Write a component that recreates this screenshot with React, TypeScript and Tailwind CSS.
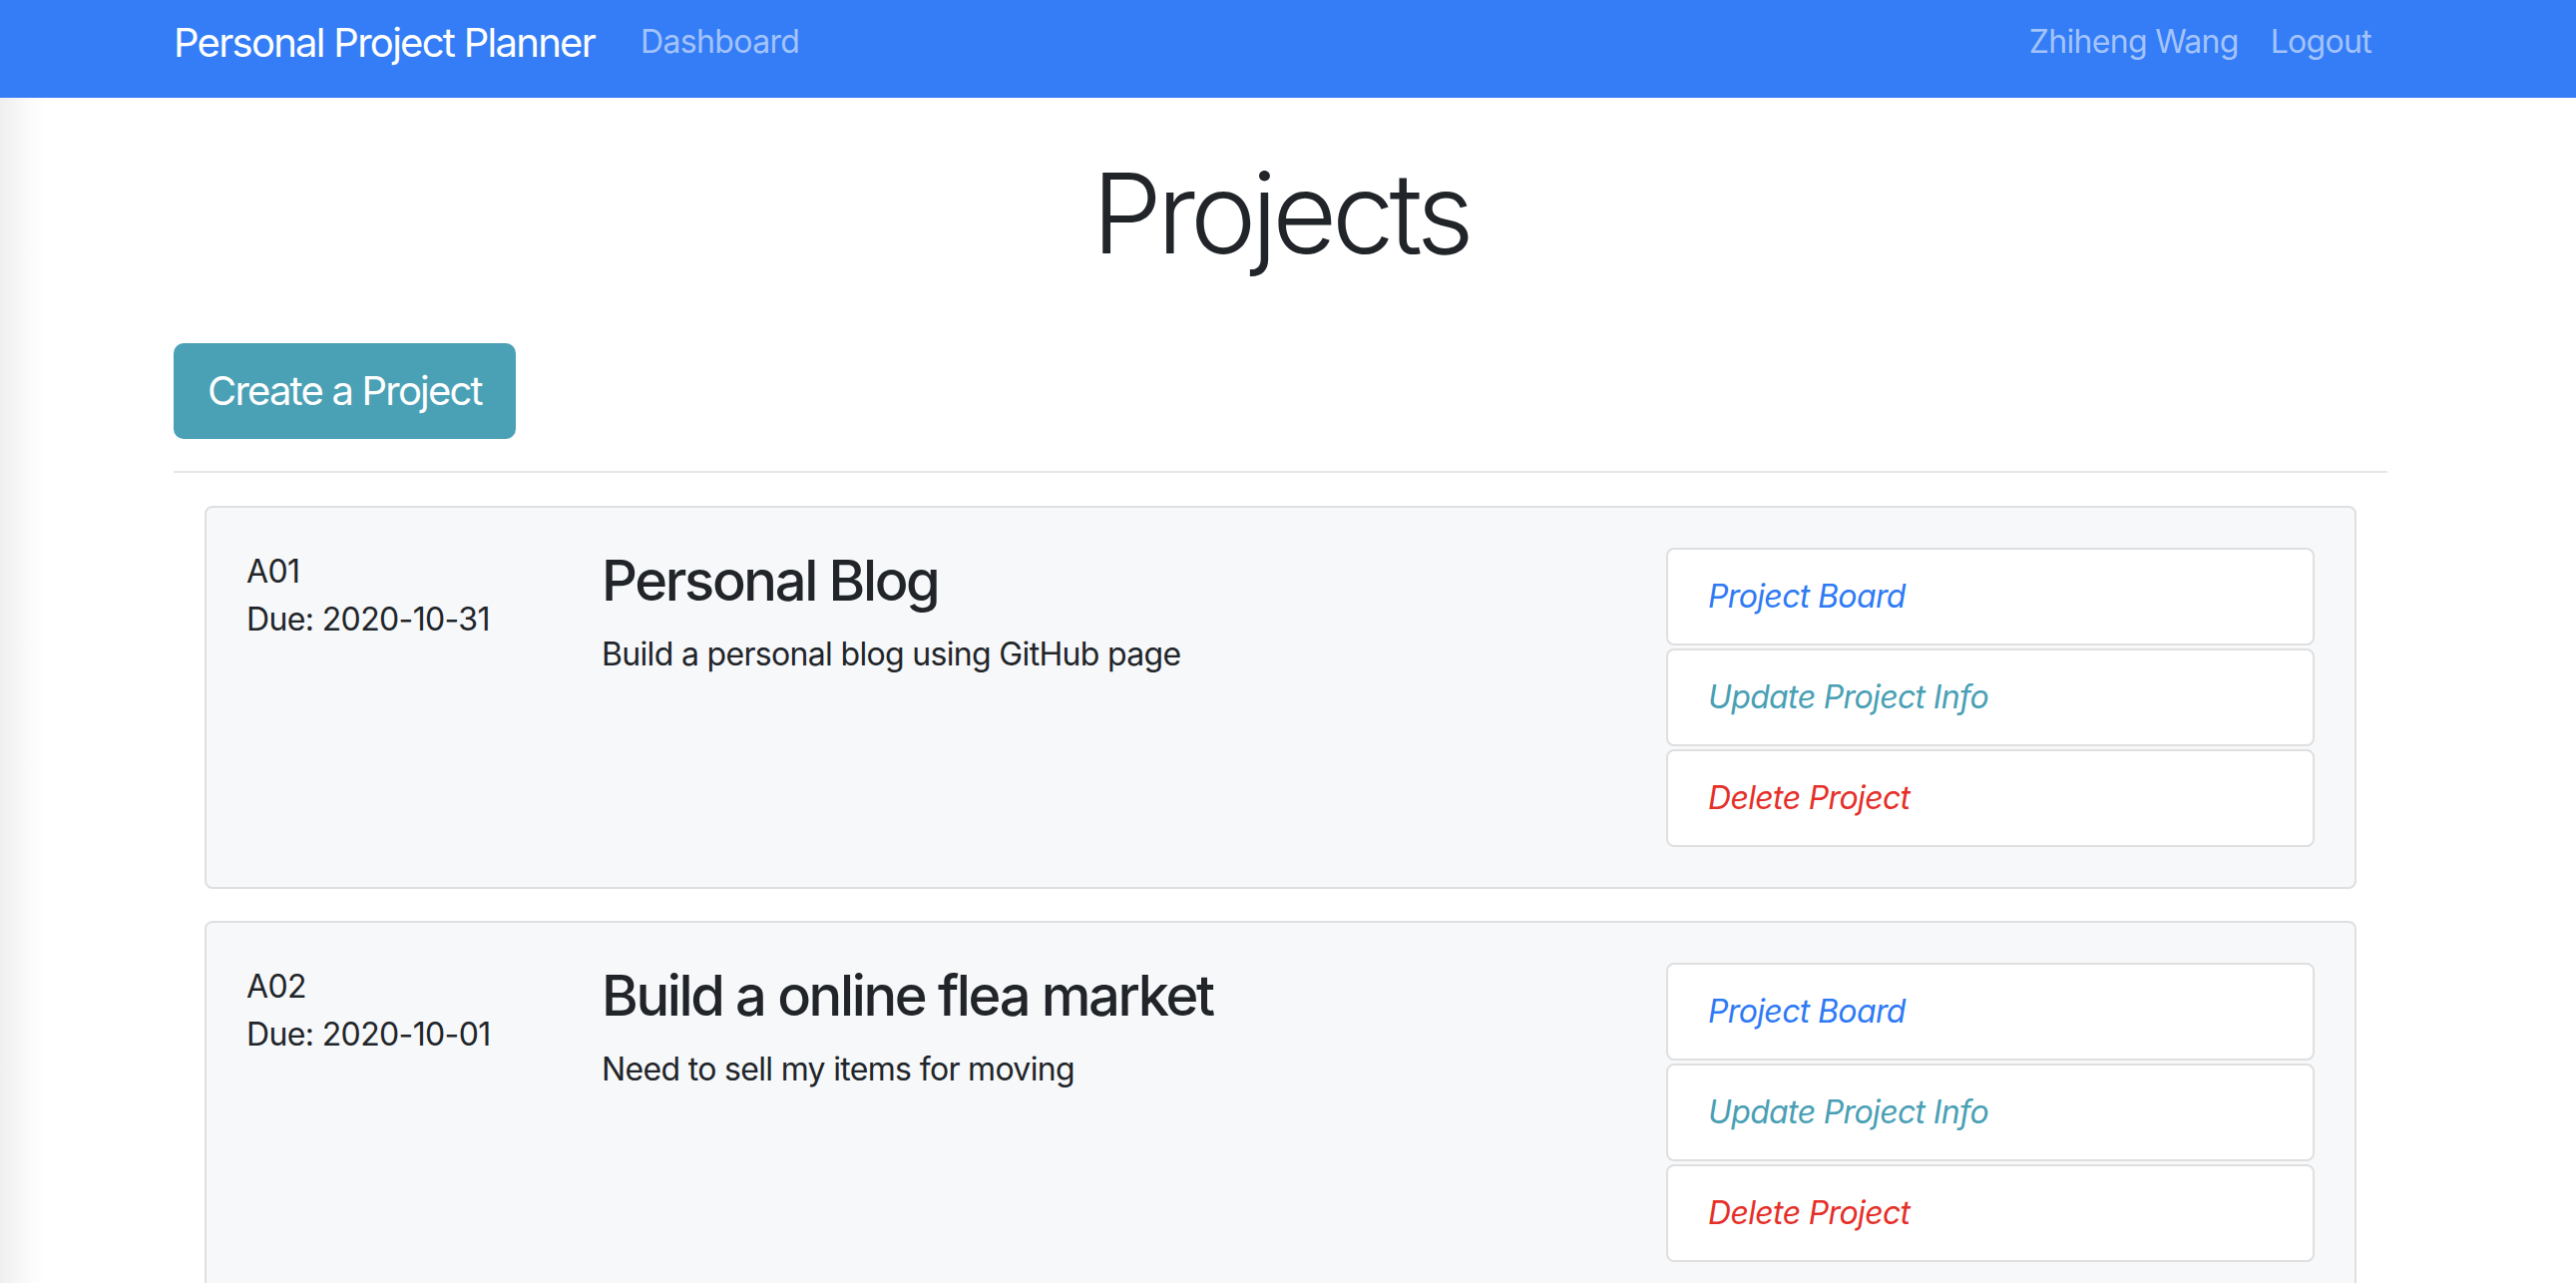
import React from 'react'

const projects = [
  {
    id: 'A01',
    due: '2020-10-31',
    name: 'Personal Blog',
    description: 'Build a personal blog using GitHub page',
  },
  {
    id: 'A02',
    due: '2020-10-01',
    name: 'Build a online flea market',
    description: 'Need to sell my items for moving',
  },
]

function ProjectCard({ project }: { project: (typeof projects)[number] }) {
  return (
    <div className="mb-[32px] rounded-[8px] border-2 border-[#dedfe0] bg-[#f7f8fa] p-[40px]">
      <div className="grid grid-cols-[296px_1007px_1fr] gap-x-[60px]">
        <div className="text-[32px] leading-[48px] tracking-[-0.02em]">
          <div>{project.id}</div>
          <div>Due: {project.due}</div>
        </div>
        <div>
          <h3 className="mb-[16px] text-[56px] leading-[67px] font-medium tracking-[-0.042em]">{project.name}</h3>
          <p className="text-[32px] leading-[48px] tracking-[-0.021em]">{project.description}</p>
        </div>
        <ul className="flex flex-col gap-[3px] text-[32px] leading-[48px] italic tracking-[-0.02em]">
          <li className="h-[98px] rounded-[8px] border-2 border-[#dfdfdf] bg-white px-[40px] pt-[23px] text-[#2f7af5]">
            Project Board
          </li>
          <li className="h-[98px] rounded-[8px] border-2 border-[#dfdfdf] bg-white px-[40px] pt-[23px] text-[#49a0b5]">
            Update Project Info
          </li>
          <li className="h-[98px] rounded-[8px] border-2 border-[#dfdfdf] bg-white px-[40px] pt-[23px] text-[#e5302a]">
            Delete Project
          </li>
        </ul>
      </div>
    </div>
  )
}

export default function App() {
  return (
    <div className="min-h-screen bg-[linear-gradient(to_right,#efefef,#fbfbfb_30px,#ffffff_45px)] font-['Inter','Liberation_Sans',sans-serif] text-[#212529]">
      <nav className="h-[98px] bg-[#347df6]">
        <div className="ml-[174px] flex w-[2219px] items-start">
          <a className="mt-[13px] mr-[30px] text-[40px] leading-[60px] tracking-[-0.043em] text-white">
            Personal Project Planner
          </a>
          <a className="mt-[18px] px-[16px] text-[32px] leading-[48px] tracking-[-0.02em] text-[#a3c3fa]">Dashboard</a>
          <div className="ml-auto flex text-[32px] leading-[48px] tracking-[-0.022em] text-[#a3c3fa]">
            <a className="mt-[18px] px-[16px]">Zhiheng Wang</a>
            <a className="mt-[18px] px-[16px]">Logout</a>
          </div>
        </div>
      </nav>

      <div className="ml-[174px] w-[2219px]">
        <h1 className="mt-[48px] text-center text-[112px] leading-[134px] font-light tracking-[-0.046em]">Projects</h1>
        <button className="mt-[64px] h-[96px] rounded-[10px] bg-[#4aa1b5] px-[34px] text-[40px] leading-[60px] tracking-[-0.045em] text-white">
          Create a Project
        </button>
        <hr className="mt-[32px] border-t-2 border-[#e6e6e6]" />
        <div className="mt-[33px] px-[31px]">
          {projects.map((p) => (
            <ProjectCard key={p.id} project={p} />
          ))}
        </div>
      </div>
    </div>
  )
}
